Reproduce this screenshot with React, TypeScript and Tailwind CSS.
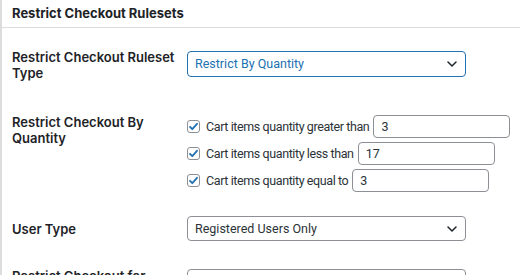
import React from 'react';

const font = { fontFamily: 'Inter, "Liberation Sans", sans-serif' };

const Chevron: React.FC = () => (
  <svg width="10" height="6" viewBox="0 0 10 6" className="shrink-0">
    <path d="M1 1l4 4 4-4" fill="none" stroke="#1d2327" strokeWidth="1.5" strokeLinecap="round" strokeLinejoin="round" />
  </svg>
);

const CheckRow: React.FC<{ label: string; value: string }> = ({ label, value }) => (
  <div className="flex items-center h-[23px]">
    <span className="shrink-0 flex items-center justify-center w-[13px] h-[13px] border border-[#8c8f94] rounded-[3px] bg-white">
      <svg width="11" height="11" viewBox="0 0 11 11">
        <path d="M2 5.8l2.3 2.4L9 2.8" fill="none" stroke="#2271b1" strokeWidth="1.8" strokeLinecap="round" strokeLinejoin="round" />
      </svg>
    </span>
    <span className="ml-[6px] whitespace-nowrap font-['Roboto',sans-serif] text-[12.5px] tracking-[-0.4px] text-[#2c3338]">{label}</span>
    <div className="ml-[4px] shrink-0 h-[23px] w-[137px] border border-[#8c8f94] rounded-[4px] flex items-center px-[7px] font-['Roboto',sans-serif] text-[12.5px] text-[#2c3338]">
      {value}
    </div>
  </div>
);

const App: React.FC = () => {
  return (
    <div className="w-[520px] h-[275px] overflow-hidden bg-white border-l-2 border-[#dcdcde] text-[#1d2327]" style={font}>
      {/* heading */}
      <div className="h-[28px] border-b border-[#dcdcde] pl-[10px] pt-[5px]">
        <h2 className="text-[13px] font-bold leading-[16px]">Restrict Checkout Rulesets</h2>
      </div>

      <div className="grid grid-cols-[175px_1fr] pl-[10px] text-[13px] font-semibold leading-[16px]">
        {/* ruleset type */}
        <div className="pt-[21px]">Restrict Checkout Ruleset<br />Type</div>
        <div className="pt-[23px]">
          <div className="w-[279px] h-[26px] border-[1.5px] border-[#2271b1] rounded-[4px] flex items-center justify-between pl-[7px] pr-[8px] font-normal font-['Roboto',sans-serif] text-[12.5px] text-[#2271b1]">
            <span>Restrict By Quantity</span>
            <Chevron />
          </div>
        </div>

        {/* quantity */}
        <div className="pt-[33px]">Restrict Checkout By<br />Quantity</div>
        <div className="pt-[34px] flex flex-col gap-[4px] font-normal">
          <CheckRow label="Cart items quantity greater than" value="3" />
          <CheckRow label="Cart items quantity less than" value="17" />
          <CheckRow label="Cart items quantity equal to" value="3" />
        </div>

        {/* user type */}
        <div className="pt-[29px]">User Type</div>
        <div className="pt-[24px]">
          <div className="w-[279px] h-[25px] border border-[#8c8f94] rounded-[4px] flex items-center justify-between pl-[7px] pr-[8px] font-normal font-['Roboto',sans-serif] text-[12.5px] text-[#2c3338]">
            <span>Registered Users Only</span>
            <Chevron />
          </div>
        </div>

        {/* restrict for */}
        <div className="pt-[27px] whitespace-nowrap">Restrict Checkout for</div>
        <div className="pt-[28px]">
          <div className="w-[279px] h-[25px] border border-[#8c8f94] rounded-[4px]" />
        </div>
      </div>
    </div>
  );
};

export default App;
